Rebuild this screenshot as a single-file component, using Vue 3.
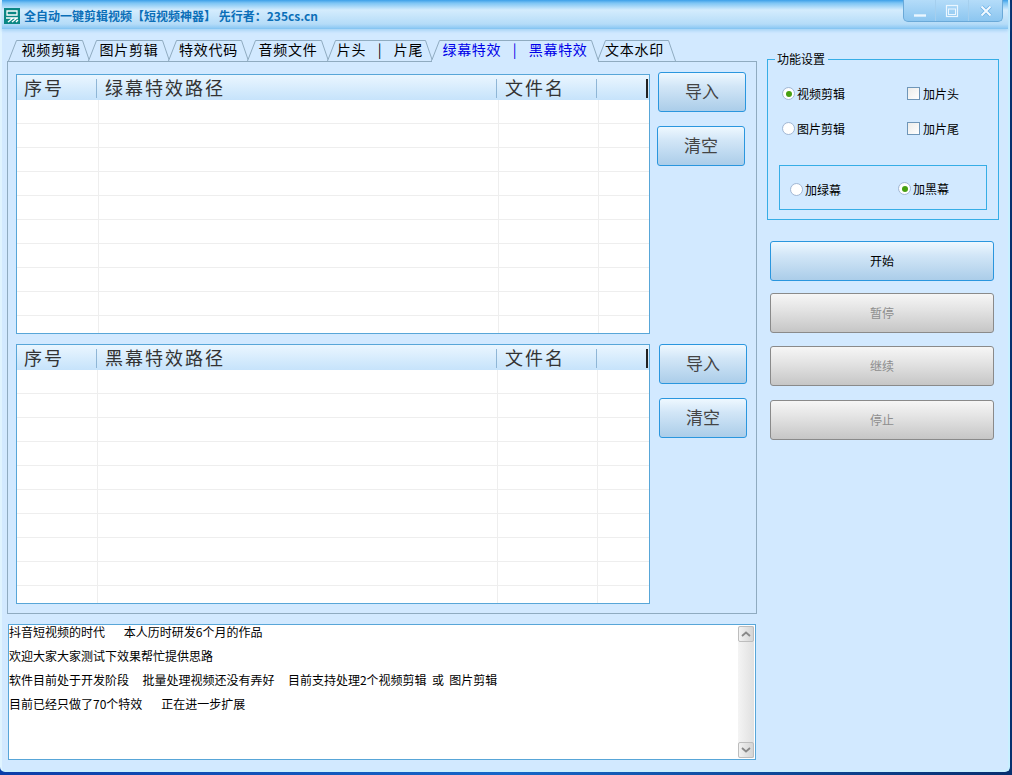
<template>
  <div class="desktop">
    <div class="window">
      <header class="titlebar">
        <svg class="app-icon" width="16" height="16" viewBox="0 0 16 16">
          <rect width="16" height="16" fill="#0b8784" />
          <path d="M3 3h10v4H3z" fill="none" stroke="#fff" stroke-width="1.300" />
          <path d="M2 10h12M4 14l5-4M8 14l5-4M12 14l2-2" stroke="#fff" stroke-width="1.400" fill="none" />
        </svg>
        <span class="title">全自动一键剪辑视频【短视频神器】 先行者：235cs.cn</span>
        <div class="win-buttons">
          <button class="win-btn btn-min">
            <svg width="14" height="14" viewBox="0 0 14 14"><path d="M1 11.500h12" stroke="#eaf6ff" stroke-width="2.400" /></svg>
          </button>
          <button class="win-btn btn-max">
            <svg width="14" height="14" viewBox="0 0 14 14">
              <rect x="1.500" y="1.500" width="11" height="11" fill="none" stroke="#eaf6ff" stroke-width="1.200" />
              <rect x="3.500" y="5" width="7" height="5.500" fill="none" stroke="#eaf6ff" />
            </svg>
          </button>
          <button class="win-btn btn-close">
            <svg width="14" height="14" viewBox="0 0 14 14">
              <path d="M2.500 2.500l9 9M11.500 2.500l-9 9" stroke="#6fb2e6" stroke-width="3.600" />
              <path d="M2.500 2.500l9 9M11.500 2.500l-9 9" stroke="#f2f9ff" stroke-width="2" />
            </svg>
          </button>
        </div>
      </header>

      <div class="content">
        <div class="left">
          <nav class="tabs">
            <div
              v-for="tab in tabs"
              :key="tab.label"
              class="tab"
              :class="{ active: tab.active }"
              :style="{ width: tab.width + 'px' }"
            >
              <svg class="tab-shape" :width="tab.width" height="21" :viewBox="`0 0 ${tab.width} 21`">
                <path :d="tabPath(tab.width)" fill="#d2e9ff" stroke="#8fabc0" />
              </svg>
              <span class="tab-label">{{ tab.label }}</span>
            </div>
          </nav>

          <section class="panel">
            <div v-for="list in lists" :key="list.title" class="list-row" :class="list.cls">
              <div class="list">
                <div class="list-head">
                  <span class="col col-no">序号</span>
                  <span class="col col-path">{{ list.title }}</span>
                  <span class="col col-name">文件名</span>
                  <span class="col col-rest"></span>
                </div>
                <div class="list-body">
                  <div v-for="n in 10" :key="n" class="list-line">
                    <i class="cell cell-no"></i>
                    <i class="cell cell-path"></i>
                    <i class="cell cell-name"></i>
                  </div>
                </div>
              </div>
              <div class="list-actions">
                <button class="btn btn-lg btn-import">导入</button>
                <button class="btn btn-lg btn-clear">清空</button>
              </div>
            </div>
          </section>

          <div class="log">
            <div class="log-text">
              <p v-for="line in logLines" :key="line">{{ line }}</p>
            </div>
            <div class="scrollbar">
              <span class="sb-arrow">
                <svg width="12" height="8" viewBox="0 0 12 8"><path d="M2 6l4-3.500 4 3.500" fill="none" stroke="#888" stroke-width="1.800" /></svg>
              </span>
              <span class="sb-track"></span>
              <span class="sb-arrow">
                <svg width="12" height="8" viewBox="0 0 12 8"><path d="M2 2l4 3.500 4-3.500" fill="none" stroke="#888" stroke-width="1.800" /></svg>
              </span>
            </div>
          </div>
        </div>

        <aside class="right">
          <fieldset class="settings">
            <legend>功能设置</legend>
            <div class="opt-grid">
              <label class="opt"><i class="radio on"></i>视频剪辑</label>
              <label class="opt"><i class="check"></i>加片头</label>
              <label class="opt"><i class="radio"></i>图片剪辑</label>
              <label class="opt"><i class="check"></i>加片尾</label>
            </div>
            <div class="screen-box">
              <label class="opt low"><i class="radio"></i>加绿幕</label>
              <label class="opt"><i class="radio on"></i>加黑幕</label>
            </div>
          </fieldset>
          <div class="actions">
            <button class="btn btn-main">开始</button>
            <button class="btn btn-main off">暂停</button>
            <button class="btn btn-main off">继续</button>
            <button class="btn btn-main off">停止</button>
          </div>
        </aside>
      </div>
    </div>
  </div>
</template>

<script setup>
const tabs = [
  { label: "视频剪辑", width: 82 },
  { label: "图片剪辑", width: 82 },
  { label: "特效代码", width: 81 },
  { label: "音频文件", width: 82 },
  { label: "片头   |   片尾", width: 106 },
  { label: "绿幕特效   |   黑幕特效", width: 168, active: true },
  { label: "文本水印", width: 79 },
];

const lists = [
  { title: "绿幕特效路径", cls: "first" },
  { title: "黑幕特效路径", cls: "second" },
];

const logLines = [
  "抖音短视频的时代       本人历时研发6个月的作品",
  "欢迎大家大家测试下效果帮忙提供思路",
  "软件目前处于开发阶段     批量处理视频还没有弄好     目前支持处理2个视频剪辑  或  图片剪辑",
  "目前已经只做了70个特效       正在进一步扩展",
];

const tabPath = (w) => `M0.5 21L8.5 0.5H${w - 7.5}L${w - 0.5} 21`;
</script>

<style>
html,
body {
  margin: 0;
  background: #0a3f9c;
}
</style>

<style scoped>
.desktop {
  width: 1012px;
  height: 775px;
  overflow: hidden;
  background: linear-gradient(90deg, #0a3fa8, #1468c8 50%, #06306f);
}

.window {
  width: 1010px;
  height: 772px;
  box-sizing: border-box;
  background: #d2e9ff;
  border-left: 2px solid #e0f4ff;
  border-right: 2px solid #c8f0ff;
  border-bottom: 2px solid #c8f0ff;
  border-radius: 0 0 5px 5px;
  font-family: "Noto Sans CJK SC", "Liberation Sans", sans-serif;
  color: #000;
}

.titlebar {
  height: 29px;
  display: flex;
  align-items: center;
  box-sizing: border-box;
  padding: 2px 0 0 2px;
  background: linear-gradient(#3c9fe8 0, #7cc4f4 3px, #d4ecfd 10px, #b5dcf8 24px, #8fcaf4 28px, #7fc1f0 100%);
  box-shadow: 0 2px 3px #a8d4f6;
}

.app-icon {
  flex: none;
  margin-right: 4px;
}

.title {
  font-size: 12px;
  font-weight: 700;
  color: #0b6fb8;
  white-space: pre;
}

.win-buttons {
  margin: -2px 5px 0 auto;
  align-self: flex-start;
  display: flex;
  height: 22px;
  box-sizing: border-box;
  border: 1px solid #6aa9d8;
  border-top: 0;
  border-radius: 0 0 5px 5px;
  background: linear-gradient(#b4dcf9, #8cc6f0);
}

.win-btn {
  padding: 0;
  border: 0;
  border-left: 1px solid #a5cfee;
  background: none;
  display: flex;
  align-items: center;
  justify-content: center;
}

.btn-min {
  width: 31px;
  border-left: 0;
}

.btn-max {
  width: 33px;
}

.btn-close {
  width: 34px;
}

.content {
  display: flex;
  padding: 11px 0 0 5px;
}

.left {
  width: 750px;
  flex: none;
}

/* tabs */
.tabs {
  display: flex;
  height: 21px;
  padding-left: 1px;
  position: relative;
  z-index: 1;
}

.tab {
  position: relative;
  flex: none;
  box-sizing: border-box;
  height: 21px;
  margin-right: -2px;
  font-size: 14px;
  letter-spacing: 0.7px;
  line-height: 19px;
  text-align: center;
  white-space: pre;
}

.tab:first-child {
  padding-left: 4px;
}

.tab:last-child {
  padding-right: 4px;
}

.tab-shape {
  position: absolute;
  left: 0;
  top: 0;
}

.tab-label {
  position: relative;
}

.tab.active {
  color: #0000e8;
  z-index: 2;
  height: 22px;
}

.tab.active::after {
  content: "";
  position: absolute;
  left: 1px;
  right: 1px;
  bottom: 0;
  height: 2px;
  background: #d2e9ff;
}

.panel {
  box-sizing: border-box;
  height: 553px;
  border: 1px solid #8fabc0;
  padding: 12px 0 0 8px;
}

.list-row {
  display: flex;
  align-items: flex-start;
}

.list-row.second {
  margin-top: 10px;
}

.list {
  width: 634px;
  height: 260px;
  flex: none;
  box-sizing: border-box;
  border: 1px solid #58a6d8;
  background: #fff;
  overflow: hidden;
}

.list-head {
  height: 25px;
  display: flex;
  align-items: center;
  background: linear-gradient(#eaf6ff, #c6e3fb);
  font-size: 18px;
  letter-spacing: 2px;
  color: #333;
}

.col {
  height: 19px;
  box-sizing: border-box;
  padding-left: 8px;
  line-height: 17px;
  margin-top: 2px;
  border-right: 1px solid #8fb6d6;
  white-space: nowrap;
}

.col-no {
  width: 80px;
  padding-left: 7px;
}

.col-path {
  width: 400px;
}

.col-name {
  width: 100px;
}

.col-rest {
  width: 51px;
  border-right: 2px solid #222;
}

.list-line {
  height: 24px;
  display: flex;
  box-sizing: border-box;
  border-bottom: 1px solid #eeeeee;
}

.list-line:last-child {
  border-bottom: 0;
}

.list-body {
  height: 233px;
  overflow: hidden;
}

.cell {
  display: block;
  box-sizing: border-box;
  border-right: 1px solid #eeeeee;
}

.cell-no {
  width: 82px;
}

.cell-path {
  width: 400px;
}

.cell-name {
  width: 100px;
}

.second .cell-no {
  width: 81px;
}

.list-actions {
  display: flex;
  flex-direction: column;
  gap: 14px;
  margin-left: 8px;
  margin-top: -2px;
}

.second .list-actions {
  margin-left: 9px;
  margin-top: 0;
}

.first .btn-clear {
  margin-left: -1px;
}

/* buttons */
.btn {
  display: block;
  box-sizing: border-box;
  padding: 0;
  font-family: inherit;
  border: 1px solid #2a96de;
  border-radius: 3px;
  background: linear-gradient(#eef8ff, #d2e6f7 35%, #abcde9);
  color: #222;
}

.btn-lg {
  width: 88px;
  height: 40px;
  padding-bottom: 3px;
  font-size: 17px;
  color: #444;
}

.btn-main {
  width: 224px;
  height: 40px;
  padding-bottom: 2px;
  font-size: 12px;
  color: #000;
}

.btn-main.off {
  border-color: #8a8a8a;
  background: linear-gradient(#f6f6f6, #e4e4e4 40%, #c6c6c6);
  color: #8e8e8e;
}

/* log */
.log {
  margin: 10px 0 0 1px;
  width: 748px;
  height: 136px;
  box-sizing: border-box;
  display: flex;
  border: 1px solid #58a6d8;
  background: #fff;
}

.log-text {
  flex: 1;
  font-size: 12px;
  line-height: 24px;
  margin-top: -5px;
}

.log-text p {
  margin: 0;
  white-space: pre;
}

.scrollbar {
  width: 16px;
  margin: 1px 1px 1px 0;
  display: flex;
  flex-direction: column;
  background: linear-gradient(90deg, #f4f4f4, #e0e0e0);
}

.sb-arrow {
  height: 16px;
  box-sizing: border-box;
  display: flex;
  align-items: center;
  justify-content: center;
  border: 1px solid #bdbdbd;
  border-radius: 2px;
  background: linear-gradient(90deg, #f2f2f2, #d4d4d4);
}

.sb-track {
  flex: 1;
}

/* right column */
.right {
  margin-left: 10px;
  width: 232px;
  flex: none;
}

.settings {
  margin: 12px 0 0;
  padding: 0 11px;
  width: 232px;
  height: 168px;
  box-sizing: border-box;
  border: 1px solid #36ade6;
  font-size: 12px;
}

.settings legend {
  margin-left: -4px;
  padding: 0 3px 0 2px;
  font-size: 12px;
  line-height: 14px;
}

.opt {
  display: flex;
  align-items: center;
  gap: 2px;
  font-size: 12px;
  white-space: nowrap;
}

.opt-grid {
  display: grid;
  grid-template-columns: 125px 1fr;
  grid-auto-rows: 35px;
  padding: 10px 0 0 3px;
}

.radio {
  display: block;
  width: 13px;
  height: 13px;
  box-sizing: border-box;
  border: 1px solid #a3b8d4;
  border-radius: 50%;
  background: radial-gradient(circle at 60% 60%, #fff 60%, #e8eef8);
  position: relative;
}

.radio.on::after {
  content: "";
  position: absolute;
  inset: 2.500px;
  border-radius: 50%;
  background: #48a010;
}

.check {
  display: block;
  width: 13px;
  height: 13px;
  margin-right: 1px;
  box-sizing: border-box;
  border: 1px solid #6f96b8;
  background: linear-gradient(135deg, #ececea, #fff);
}

.screen-box {
  box-sizing: border-box;
  width: 208px;
  height: 45px;
  margin-top: 19px;
  border: 1px solid #36ade6;
  display: grid;
  grid-template-columns: 108px 1fr;
  align-items: center;
  padding: 2px 0 0 10px;
}

.opt.low {
  margin-top: 2px;
}

.actions {
  display: flex;
  flex-direction: column;
  gap: 12px;
  margin: 21px 0 0 3px;
}

.actions .btn:nth-child(3) {
  margin-top: 1px;
}

.actions .btn:nth-child(4) {
  margin-top: 2px;
}
</style>
